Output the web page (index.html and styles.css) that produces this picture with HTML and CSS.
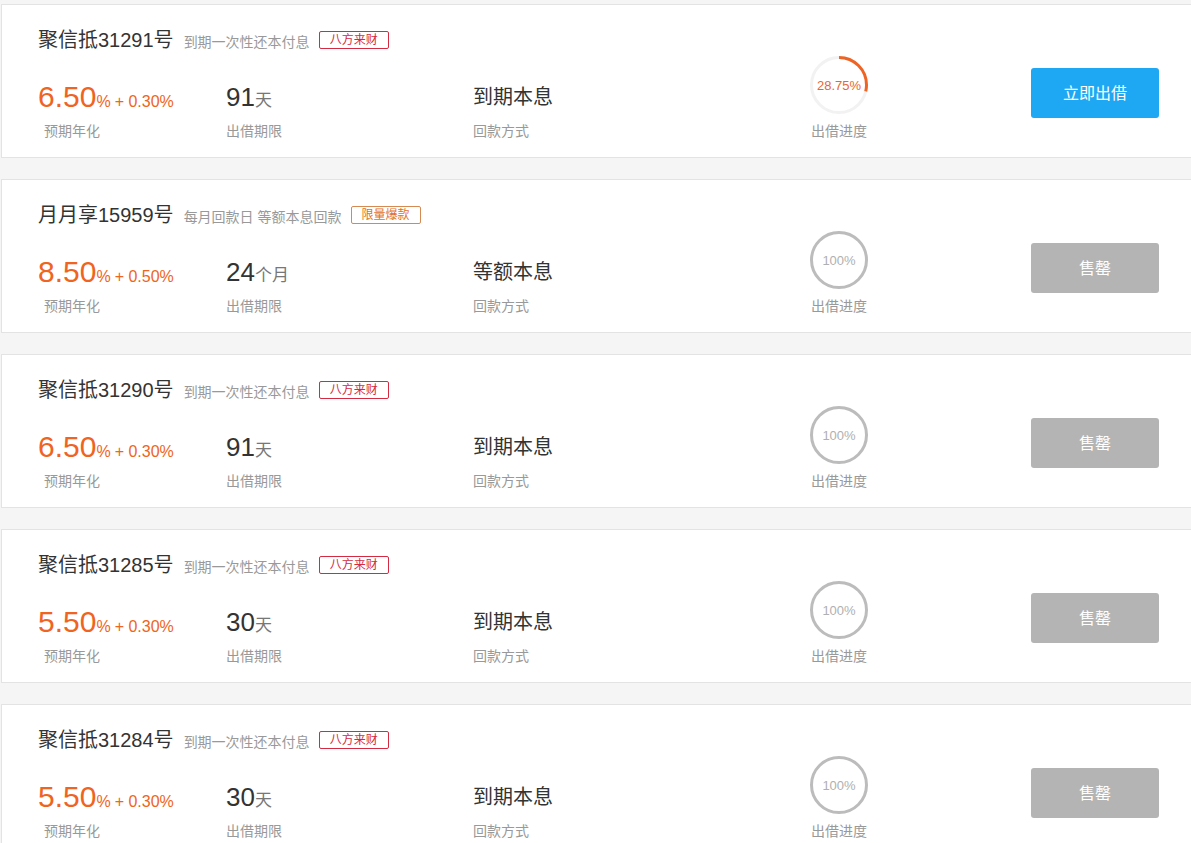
FILE: index.html
```html
<!DOCTYPE html>
<html lang="zh-CN">
<head>
<meta charset="utf-8">
<title>出借列表</title>
<link rel="stylesheet" href="styles.css">
</head>
<body>
<div class="list">

  <div class="card">
    <div class="head">
      <span class="title">聚信抵31291号</span>
      <span class="sub">到期一次性还本付息</span>
      <span class="tag tag-red">八方来财</span>
    </div>
    <div class="body">
      <div class="col col-rate">
        <div class="val rate"><span class="big">6.50</span><span class="unit">%</span><span class="extra">+ 0.30%</span></div>
        <div class="label label-rate">预期年化</div>
      </div>
      <div class="col col-term">
        <div class="val term"><span class="num">91</span><span class="tunit">天</span></div>
        <div class="label">出借期限</div>
      </div>
      <div class="col col-way">
        <div class="val way">到期本息</div>
        <div class="label">回款方式</div>
      </div>
      <div class="col col-prog">
        <div class="ring">
          <svg width="60" height="60" viewBox="0 0 60 60">
            <circle cx="30" cy="30" r="27.5" fill="none" stroke="#f2f2f2" stroke-width="3"/>
            <circle cx="30" cy="30" r="27.5" fill="none" stroke="#ee6424" stroke-width="3" stroke-dasharray="49.68 200" transform="rotate(-90 30 30)"/>
          </svg>
          <span class="pct pct-on">28.75%</span>
        </div>
        <div class="label">出借进度</div>
      </div>
      <a class="btn btn-blue">立即出借</a>
    </div>
  </div>

  <div class="card">
    <div class="head">
      <span class="title">月月享15959号</span>
      <span class="sub">每月回款日 等额本息回款</span>
      <span class="tag tag-orange">限量爆款</span>
    </div>
    <div class="body">
      <div class="col col-rate">
        <div class="val rate"><span class="big">8.50</span><span class="unit">%</span><span class="extra">+ 0.50%</span></div>
        <div class="label label-rate">预期年化</div>
      </div>
      <div class="col col-term">
        <div class="val term"><span class="num">24</span><span class="tunit">个月</span></div>
        <div class="label">出借期限</div>
      </div>
      <div class="col col-way">
        <div class="val way">等额本息</div>
        <div class="label">回款方式</div>
      </div>
      <div class="col col-prog">
        <div class="ring">
          <svg width="60" height="60" viewBox="0 0 60 60">
            <circle cx="30" cy="30" r="27.5" fill="none" stroke="#bcbcbc" stroke-width="3"/>
          </svg>
          <span class="pct">100%</span>
        </div>
        <div class="label">出借进度</div>
      </div>
      <a class="btn btn-gray">售罄</a>
    </div>
  </div>

  <div class="card">
    <div class="head">
      <span class="title">聚信抵31290号</span>
      <span class="sub">到期一次性还本付息</span>
      <span class="tag tag-red">八方来财</span>
    </div>
    <div class="body">
      <div class="col col-rate">
        <div class="val rate"><span class="big">6.50</span><span class="unit">%</span><span class="extra">+ 0.30%</span></div>
        <div class="label label-rate">预期年化</div>
      </div>
      <div class="col col-term">
        <div class="val term"><span class="num">91</span><span class="tunit">天</span></div>
        <div class="label">出借期限</div>
      </div>
      <div class="col col-way">
        <div class="val way">到期本息</div>
        <div class="label">回款方式</div>
      </div>
      <div class="col col-prog">
        <div class="ring">
          <svg width="60" height="60" viewBox="0 0 60 60">
            <circle cx="30" cy="30" r="27.5" fill="none" stroke="#bcbcbc" stroke-width="3"/>
          </svg>
          <span class="pct">100%</span>
        </div>
        <div class="label">出借进度</div>
      </div>
      <a class="btn btn-gray">售罄</a>
    </div>
  </div>

  <div class="card">
    <div class="head">
      <span class="title">聚信抵31285号</span>
      <span class="sub">到期一次性还本付息</span>
      <span class="tag tag-red">八方来财</span>
    </div>
    <div class="body">
      <div class="col col-rate">
        <div class="val rate"><span class="big">5.50</span><span class="unit">%</span><span class="extra">+ 0.30%</span></div>
        <div class="label label-rate">预期年化</div>
      </div>
      <div class="col col-term">
        <div class="val term"><span class="num">30</span><span class="tunit">天</span></div>
        <div class="label">出借期限</div>
      </div>
      <div class="col col-way">
        <div class="val way">到期本息</div>
        <div class="label">回款方式</div>
      </div>
      <div class="col col-prog">
        <div class="ring">
          <svg width="60" height="60" viewBox="0 0 60 60">
            <circle cx="30" cy="30" r="27.5" fill="none" stroke="#bcbcbc" stroke-width="3"/>
          </svg>
          <span class="pct">100%</span>
        </div>
        <div class="label">出借进度</div>
      </div>
      <a class="btn btn-gray">售罄</a>
    </div>
  </div>

  <div class="card">
    <div class="head">
      <span class="title">聚信抵31284号</span>
      <span class="sub">到期一次性还本付息</span>
      <span class="tag tag-red">八方来财</span>
    </div>
    <div class="body">
      <div class="col col-rate">
        <div class="val rate"><span class="big">5.50</span><span class="unit">%</span><span class="extra">+ 0.30%</span></div>
        <div class="label label-rate">预期年化</div>
      </div>
      <div class="col col-term">
        <div class="val term"><span class="num">30</span><span class="tunit">天</span></div>
        <div class="label">出借期限</div>
      </div>
      <div class="col col-way">
        <div class="val way">到期本息</div>
        <div class="label">回款方式</div>
      </div>
      <div class="col col-prog">
        <div class="ring">
          <svg width="60" height="60" viewBox="0 0 60 60">
            <circle cx="30" cy="30" r="27.5" fill="none" stroke="#bcbcbc" stroke-width="3"/>
          </svg>
          <span class="pct">100%</span>
        </div>
        <div class="label">出借进度</div>
      </div>
      <a class="btn btn-gray">售罄</a>
    </div>
  </div>

</div>
</body>
</html>
```

FILE: styles.css
```css
* {
  box-sizing: border-box;
}

html, body {
  margin: 0;
  padding: 0;
}

body {
  background: #f5f5f5;
  font-family: "Liberation Sans", Arial, "Noto Sans CJK SC", sans-serif;
  color: #333;
  overflow: hidden;
}

.list {
  padding-top: 4px;
  padding-left: 1px;
  width: 1200px;
}

.card {
  height: 154px;
  margin-bottom: 21px;
  background: #fff;
  border: 1px solid #e3e3e3;
  padding: 23px 0 0 36px;
  display: flex;
  flex-direction: column;
}

.head {
  height: 24px;
  display: flex;
  align-items: baseline;
}

.title {
  font-size: 20px;
  line-height: 24px;
  color: #333;
}

.sub {
  font-size: 14px;
  color: #999;
  margin-left: 10px;
}

.tag {
  align-self: center;
  margin-left: 9px;
  height: 18px;
  line-height: 16px;
  padding: 0 10px;
  font-size: 12px;
  border: 1px solid;
  border-radius: 2px;
}

.tag-red {
  color: #d42b43;
  border-color: #d42b43;
}

.tag-orange {
  color: #df6f2c;
  border-color: #d58a53;
}

.body {
  height: 88px;
  display: flex;
  align-items: flex-end;
}

.col {
  display: flex;
  flex-direction: column;
}

.col-rate {
  width: 188px;
}

.col-term {
  width: 247px;
}

.col-way {
  width: 336px;
}

.col-prog {
  width: 60px;
  align-items: center;
}

.val {
  height: 30px;
  line-height: 30px;
  margin-bottom: 10px;
  white-space: nowrap;
}

.rate {
  color: #ef6421;
}

.rate .big {
  font-size: 30px;
}

.rate .unit {
  font-size: 16px;
  line-height: 1;
}

.rate .extra {
  font-size: 16px;
  line-height: 1;
  margin-left: 4px;
}

.term .num {
  font-size: 26px;
  color: #333;
}

.term .tunit {
  font-size: 17px;
  line-height: 1;
  color: #777;
}

.way {
  font-size: 20px;
  color: #333;
}

.label {
  font-size: 14px;
  line-height: 18px;
  color: #999;
  white-space: nowrap;
}

.label-rate {
  margin-left: 6px;
}

.ring {
  position: relative;
  width: 60px;
  height: 60px;
  margin-bottom: 7px;
}

.ring svg {
  display: block;
}

.pct {
  position: absolute;
  left: 0;
  right: 0;
  top: 0;
  bottom: 0;
  display: flex;
  align-items: center;
  justify-content: center;
  font-size: 13px;
  color: #b0b0b0;
}

.pct-on {
  color: #e8682c;
}

.btn {
  align-self: flex-start;
  margin-top: 16px;
  margin-left: 162px;
  width: 128px;
  height: 50px;
  padding-bottom: 2px;
  border-radius: 3px;
  display: flex;
  align-items: center;
  justify-content: center;
  font-size: 16px;
  color: #fff;
  text-decoration: none;
}

.btn-blue {
  background: #1ea8f3;
}

.btn-gray {
  background: #b4b4b4;
}
```
